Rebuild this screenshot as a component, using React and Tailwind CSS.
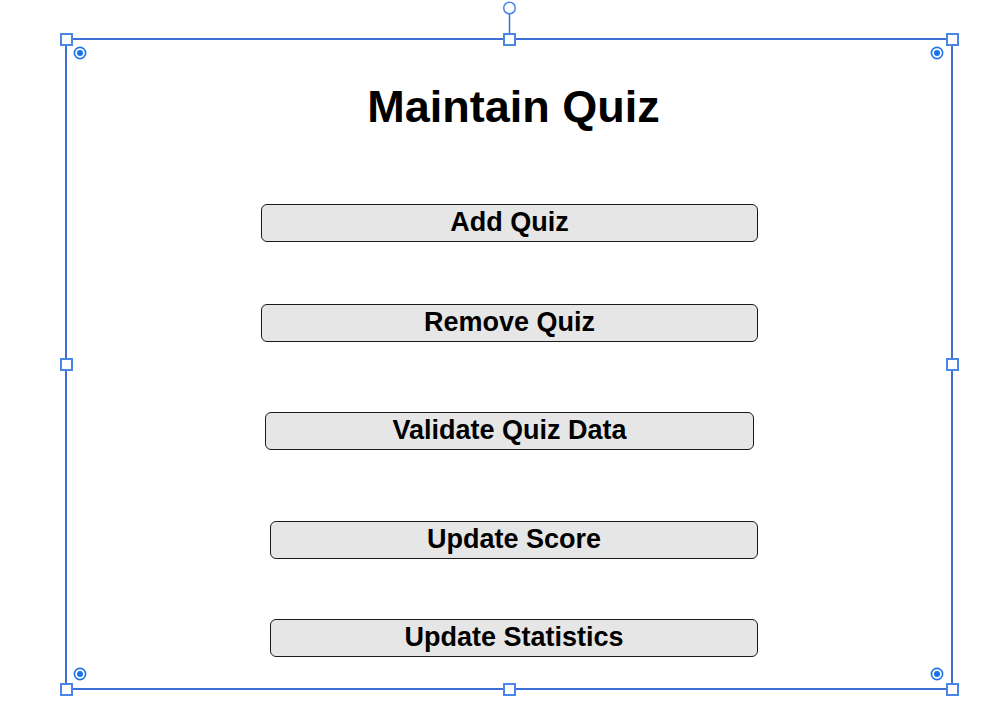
const buttons = [
  { label: 'Add Quiz', mt: 'mt-[72px]', ml: 'ml-[194px]', w: 'w-[497px]' },
  { label: 'Remove Quiz', mt: 'mt-[62px]', ml: 'ml-[194px]', w: 'w-[497px]' },
  { label: 'Validate Quiz Data', mt: 'mt-[70px]', ml: 'ml-[198px]', w: 'w-[489px]' },
  { label: 'Update Score', mt: 'mt-[71px]', ml: 'ml-[203px]', w: 'w-[488px]' },
  { label: 'Update Statistics', mt: 'mt-[60px]', ml: 'ml-[203px]', w: 'w-[488px]' },
]

// square resize handles, centre points in page coords
const handles = [
  [66, 39], [509.5, 39], [952.5, 39],
  [66, 364], [952.5, 364],
  [66, 689.5], [509.5, 689.5], [952.5, 689.5],
]

const targets = [[80, 52.5], [937, 52.5], [80, 673.5], [937, 673.5]]

function Target({ x, y }) {
  return (
    <svg className="absolute" style={{ left: x - 7, top: y - 7 }} width="14" height="14" viewBox="0 0 14 14">
      <circle cx="7" cy="7" r="5.6" fill="white" stroke="#1a73e8" strokeWidth="1.6" />
      <circle cx="7" cy="7" r="3" fill="#1a73e8" />
    </svg>
  )
}

export default function App() {
  return (
    <div className="relative w-[987px] h-[718px] bg-white overflow-hidden pt-[38px] pl-[65px] font-['Liberation_Sans',Arial,sans-serif] text-black">
      <div className="w-[888px] h-[652px] border-2 border-[#3d6fd4] flex flex-col">
        <h1 className="mt-[42px] pl-[9px] text-center text-[45px] leading-[50px] font-bold">Maintain Quiz</h1>
        {buttons.map((b) => (
          <div
            key={b.label}
            className={`${b.mt} ${b.ml} ${b.w} h-[38px] shrink-0 flex items-center justify-center pb-[2px] bg-[#e6e6e6] border border-[#1a1a1a] rounded-[6px] text-[27px] font-bold`}
          >
            {b.label}
          </div>
        ))}
      </div>

      {/* rotation handle */}
      <svg className="absolute left-[500px] top-0" width="20" height="34" viewBox="0 0 20 34">
        <line x1="9.5" y1="14" x2="9.5" y2="33" stroke="#3d6fd4" strokeWidth="1.5" />
        <circle cx="9.5" cy="8" r="5.8" fill="white" stroke="#4a86e8" strokeWidth="1.5" />
      </svg>

      {handles.map(([x, y], i) => (
        <div
          key={i}
          className="absolute w-[13px] h-[13px] bg-white border-2 border-[#4a86e8]"
          style={{ left: x - 6.5, top: y - 6.5 }}
        />
      ))}

      {targets.map(([x, y], i) => (
        <Target key={i} x={x} y={y} />
      ))}
    </div>
  )
}
